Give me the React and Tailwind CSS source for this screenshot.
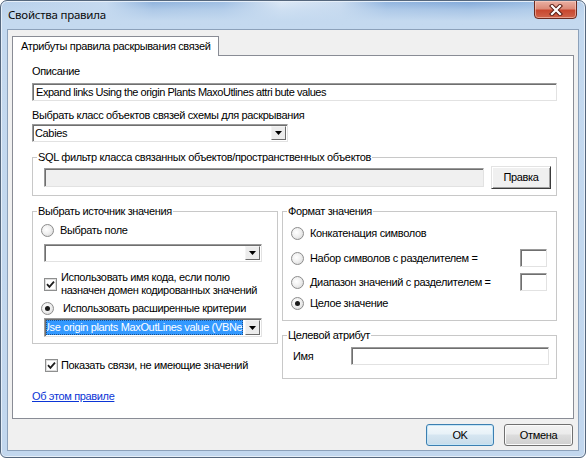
import React from 'react';

// sunken edit box edge, classic 3D look
const sunken =
  'border border-t-[#9a9a9a] border-l-[#9a9a9a] border-r-[#e2e2e2] border-b-[#e2e2e2] shadow-[inset_1px_1px_0_#6f6f6f]';

const Radio = ({ checked }) => (
  <span className="flex h-[13px] w-[13px] shrink-0 items-center justify-center rounded-full border border-[#8c8c8c] bg-[radial-gradient(circle_at_40%_40%,#ffffff_0%,#f0f0f0_45%,#d2d2d2_100%)]">
    {checked && <span className="h-[5px] w-[5px] rounded-full bg-[#1b1b1b]" />}
  </span>
);

const Checkbox = ({ checked }) => (
  <span className="flex h-[13px] w-[13px] shrink-0 items-center justify-center border border-[#8e8f8f] bg-white shadow-[inset_0_0_0_1px_#dedede]">
    {checked && (
      <svg width="9" height="9" viewBox="0 0 9 9">
        <path d="M1 4.2 L3.4 6.8 L8 1.6" stroke="#1e1e1e" strokeWidth="1.8" fill="none" />
      </svg>
    )}
  </span>
);

const DropButton = () => (
  <span className="m-[1px] flex w-[15px] shrink-0 items-center justify-center border border-t-[#f4f4f4] border-l-[#f4f4f4] border-r-[#6b6b6b] border-b-[#6b6b6b] bg-[#ececec]">
    <svg width="7" height="4" viewBox="0 0 7 4">
      <path d="M0 0 H7 L3.5 4 Z" fill="#000" />
    </svg>
  </span>
);

const Combo = ({ className = '', children }) => (
  <div className={`flex items-stretch bg-white ${sunken} ${className}`}>
    <div className="flex flex-1 items-center overflow-hidden whitespace-nowrap pl-[2px]">{children}</div>
    <DropButton />
  </div>
);

// group box; horizontal padding stays off the fieldset so the legend keeps its spot
const Group = ({ title, className = '', children }) => (
  <fieldset className={`border border-[#c8c8c8] ${className}`}>
    <legend className="ml-[4px] px-[1px] leading-[13px]">{title}</legend>
    {children}
  </fieldset>
);

const CloseButton = () => (
  <div className="-mt-px mr-[8px] flex h-[19px] w-[43px] items-center justify-center rounded-b-[4px] border border-[#6b2a20] bg-[linear-gradient(180deg,#eab0a3_0%,#dc8b79_45%,#c8472f_55%,#d0644b_100%)] shadow-[inset_0_0_0_1px_rgba(255,220,210,0.5)]">
    <svg width="14" height="12" viewBox="0 0 14 12">
      <path d="M3 2 L11 10 M11 2 L3 10" stroke="#5b1e15" strokeWidth="4.2" strokeLinecap="square" />
      <path d="M3 2 L11 10 M11 2 L3 10" stroke="#ffffff" strokeWidth="2.2" strokeLinecap="square" />
    </svg>
  </div>
);

const DialogButton = ({ primary, children }) => (
  <button
    className={`h-[22px] rounded-[3px] border text-[11px] ${
      primary
        ? 'w-[68px] border-[#3c7fb1] bg-[linear-gradient(180deg,#f3f8fb_0%,#e8f2f8_45%,#d6e6f1_50%,#c8dcea_100%)] shadow-[inset_0_0_0_1px_#c6e6f7]'
        : 'w-[69px] border-[#707070] bg-[linear-gradient(180deg,#f2f2f2_0%,#ebebeb_45%,#dddddd_50%,#cfcfcf_100%)] shadow-[inset_0_0_0_1px_#fbfbfb]'
    }`}
  >
    {children}
  </button>
);

export default function App() {
  return (
    <div className="h-[458px] w-[586px] overflow-hidden bg-white font-['Liberation_Sans',Arial,sans-serif] text-[11px] leading-[13px] tracking-[-0.35px] text-black">
      <div className="flex h-full w-full flex-col overflow-hidden rounded-t-[7px] rounded-b-[6px] border border-[#55677d] bg-[linear-gradient(180deg,rgba(196,217,239,0)_0px,rgba(196,217,239,0.6)_9px,#c4d9ef_20px,#c2d7ee_100%),linear-gradient(90deg,#b7cfea_0%,#c6daf0_18%,#8db1dc_26%,#9dbde2_38%,#dde9f6_48%,#cbdcf0_58%,#8fb3de_66%,#7fa7d8_80%,#98bbe2_92%,#b8cfea_100%)] shadow-[inset_0_0_0_1px_#e6eff9]">
        {/* title bar */}
        <div className="flex h-[28px] shrink-0 items-start justify-between">
          <span className="ml-[7px] mt-[7px] font-['Noto_Sans',sans-serif] text-[11.5px] leading-[14px] tracking-[-0.25px] text-[#0b0b0b]">
            Свойства правила
          </span>
          <CloseButton />
        </div>

        {/* client area */}
        <div className="mx-[6px] mb-[6px] flex flex-1 flex-col border border-[#8ca1ba] bg-[#f0f0f0] px-[4px] pt-[6px] pb-[4px]">
          <div className="flex">
            <div className="relative z-10 -mb-px h-[20px] border border-b-0 border-[#898c95] bg-white px-[8px] pt-[3px]">
              Атрибуты правила раскрывания связей
            </div>
          </div>

          <div className="flex flex-1 flex-col border border-[#898c95] bg-white pl-[19px] pr-[16px]">
            <div className="mt-[9px] h-[13px]">Описание</div>
            <div className={`mt-[5px] flex h-[18px] items-center bg-white pl-[3px] tracking-[-0.45px] ${sunken}`}>
              Expand links Using the origin Plants MaxoUtlines attri bute values
            </div>

            <div className="mt-[8px] h-[13px]">Выбрать класс объектов связей схемы для раскрывания</div>
            <Combo className="mt-[2px] h-[18px] w-[256px]">Cabies</Combo>

            <Group title="SQL фильтр класса связанных объектов/пространственных объектов" className="mt-[9px] pb-[6px]">
              <div className="mt-[2px] flex h-[23px] items-center justify-between pl-[11px] pr-[5px]">
                <div className={`h-[19px] w-[440px] bg-[#f0f0f0] ${sunken}`} />
                <button className="h-[23px] w-[60px] border border-t-[#e3e3e3] border-l-[#e3e3e3] border-r-[#3a3a3a] border-b-[#3a3a3a] bg-[#f0f0f0] text-[11px] shadow-[inset_1px_1px_0_#ffffff,inset_-1px_-1px_0_#a0a0a0]">
                  Правка
                </button>
              </div>
            </Group>

            <div className="mt-[9px] flex gap-[4px]">
              {/* value source */}
              <div className="flex w-[246px] flex-col">
                <Group title="Выбрать источник значения" className="pb-[6px]">
                  <div className="mt-[6px] flex h-[13px] items-center gap-[6px] pl-[8px]">
                    <Radio />
                    <span>Выбрать поле</span>
                  </div>
                  <Combo className="ml-[11px] mt-[7px] h-[18px] w-[218px]" />
                  <div className="mt-[9px] flex items-center gap-[4px] pl-[11px]">
                    <Checkbox checked />
                    <span>
                      Использовать имя кода, если полю
                      <br />
                      назначен домен кодированных значений
                    </span>
                  </div>
                  <div className="mt-[5px] flex h-[13px] items-center gap-[9px] pl-[8px]">
                    <Radio checked />
                    <span>Использовать расширенные критерии</span>
                  </div>
                  <div className={`ml-[11px] mt-[3px] flex h-[19px] w-[218px] items-stretch bg-white ${sunken}`}>
                    <div className="m-[1px] flex flex-1 items-center overflow-hidden whitespace-nowrap border border-dotted border-[#1c4f8a] bg-[#3399ff] text-white">
                      <span className="-ml-[5px]">Use origin plants MaxOutLines value (VBNet)</span>
                    </div>
                    <DropButton />
                  </div>
                </Group>
                <div className="mt-[15px] flex h-[13px] items-center gap-[3px] pl-[13px]">
                  <Checkbox checked />
                  <span>Показать связи, не имеющие значений</span>
                </div>
              </div>

              {/* value format + target attribute */}
              <div className="flex w-[275px] flex-col">
                <Group title="Формат значения" className="pb-[10px] pr-[9px]">
                  <div className="mt-[9px] flex h-[13px] items-center gap-[6px] pl-[8px]">
                    <Radio />
                    <span>Конкатенация символов</span>
                  </div>
                  <div className="mt-[9px] flex h-[18px] items-center justify-between pl-[8px]">
                    <span className="flex items-center gap-[6px]">
                      <Radio />
                      <span>Набор символов с разделителем =</span>
                    </span>
                    <div className={`h-[18px] w-[27px] bg-white ${sunken}`} />
                  </div>
                  <div className="mt-[6px] flex h-[18px] items-center justify-between pl-[8px]">
                    <span className="flex items-center gap-[6px]">
                      <Radio />
                      <span>Диапазон значений с разделителем =</span>
                    </span>
                    <div className={`h-[18px] w-[27px] bg-white ${sunken}`} />
                  </div>
                  <div className="mt-[6px] flex h-[13px] items-center gap-[6px] pl-[8px]">
                    <Radio checked />
                    <span>Целое значение</span>
                  </div>
                </Group>

                <Group title="Целевой атрибут" className="mt-[8px] pb-[13px]">
                  <div className="mt-[5px] flex h-[18px] items-center pl-[10px]">
                    <span className="w-[58px]">Имя</span>
                    <div className={`h-[18px] w-[198px] bg-white ${sunken}`} />
                  </div>
                </Group>
              </div>
            </div>

            <div className="mt-[11px] h-[13px]">
              <span className="text-[#0b35d6] underline">Об этом правиле</span>
            </div>
          </div>

          <div className="mt-[5px] flex justify-end gap-[10px] pr-[1px]">
            <DialogButton primary>OK</DialogButton>
            <DialogButton>Отмена</DialogButton>
          </div>
        </div>
      </div>
    </div>
  );
}
